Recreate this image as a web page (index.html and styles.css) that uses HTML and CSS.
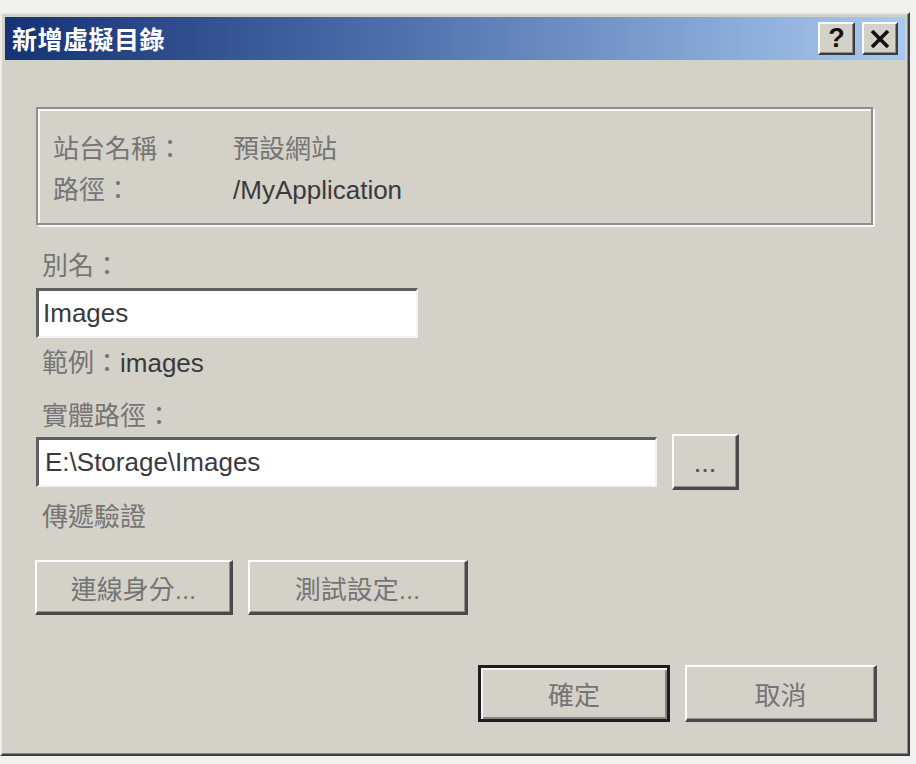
FILE: index.html
```html
<!DOCTYPE html>
<html lang="zh-Hant">
<head>
<meta charset="utf-8">
<title>新增虛擬目錄</title>
<link rel="stylesheet" href="styles.css">
</head>
<body>
<div class="dialog">
  <div class="titlebar">
    <span class="title">新增虛擬目錄</span>
    <div class="tb-buttons">
      <div class="tb-btn help">?</div>
      <div class="tb-btn close">
        <svg width="20" height="18" viewBox="0 0 20 18"><path d="M2 1 L18 17 M18 1 L2 17" stroke="#111" stroke-width="3.6" fill="none"/></svg>
      </div>
    </div>
  </div>
  <div class="content">
    <div class="group">
      <div class="row"><span class="k">站台名稱：</span><span class="v">預設網站</span></div>
      <div class="row"><span class="k">路徑：</span><span class="v latin">/MyApplication</span></div>
    </div>
    <div class="label first">別名：</div>
    <div class="input alias"><span class="latin">Images</span></div>
    <div class="label hint">範例：<span class="latin">images</span></div>
    <div class="label phys">實體路徑：</div>
    <div class="path-row">
      <div class="input path"><span class="latin">E:\Storage\Images</span></div>
      <div class="btn browse">...</div>
    </div>
    <div class="label pass">傳遞驗證</div>
    <div class="btn-row">
      <div class="btn conn">連線身分...</div>
      <div class="btn test">測試設定...</div>
    </div>
    <div class="footer">
      <div class="btn ok">確定</div>
      <div class="btn cancel">取消</div>
    </div>
  </div>
</div>
</body>
</html>
```

FILE: styles.css
```css
* { box-sizing: border-box; }

body {
  margin: 0;
  background: #f1f1ef;
  font-family: "Liberation Sans", "Noto Sans CJK TC", sans-serif;
  font-size: 26px;
}

.dialog {
  width: 910px;
  height: 744px;
  margin-top: 12px;
  background: #d4d1c9;
  border: 2px solid;
  border-color: #ecebe6 #3e3e3e #3e3e3e #ecebe6;
  padding: 3px;
  box-shadow: inset -1px -1px 0 #8a8a8a;
  display: flex;
  flex-direction: column;
}

.titlebar {
  height: 43px;
  background: linear-gradient(to right, #163274 0%, #4a6aa8 40%, #a9c9ef 100%);
  display: flex;
  align-items: center;
  justify-content: space-between;
  padding: 0 7px 0 7px;
}

.title {
  color: #fff;
  font-family: "Noto Sans CJK TC", sans-serif;
  font-weight: 700;
  font-size: 25px;
  line-height: 43px;
  letter-spacing: 0.5px;
}

.tb-buttons {
  display: flex;
  gap: 7px;
}

.tb-btn {
  width: 37px;
  height: 33px;
  background: #d4d1c9;
  border: 2px solid;
  border-color: #fbfbf9 #3c3c3c #3c3c3c #fbfbf9;
  box-shadow: inset -1px -1px 0 #8a8a8a;
  display: flex;
  align-items: center;
  justify-content: center;
  font-weight: 700;
  color: #111;
}

.tb-btn.help {
  font-size: 27px;
  line-height: 1;
}

.tb-btn.close { width: 36px; }

.content {
  flex: 1;
  padding: 0 32px 0 31px;
  display: flex;
  flex-direction: column;
}

.k, .label, .v, .btn { color: #757575; }
.latin { color: #3a3a3a; }

.group {
  margin-top: 47px;
  height: 118px;
  border: 2px solid #8e8e8e;
  box-shadow: inset 2px 2px 0 #f7f7f5, 2px 2px 0 #f7f7f5;
  padding: 20px 15px 0 15px;
}

.row {
  display: flex;
  height: 41px;
  line-height: 41px;
}

.k { width: 180px; }

.label {
  line-height: 36px;
  height: 36px;
  padding-left: 6px;
}

.label.first { margin-top: 23px; }
.label.hint { margin-top: 7px; }
.label.phys { margin-top: 17px; }
.label.pass { margin-top: 9px; }

.input {
  background: #fff;
  height: 50px;
  border-style: solid;
  border-width: 3px 2px 2px 3px;
  border-color: #5e5e5e #f3f3f1 #f3f3f1 #5e5e5e;
  display: flex;
  align-items: center;
  padding-left: 4px;
}

.input.alias {
  width: 382px;
  margin-top: 4px;
}

.path-row {
  display: flex;
  align-items: center;
  gap: 15px;
  height: 56px;
}

.input.path { width: 621px; padding-left: 6px; }

.btn {
  background: #d4d1c9;
  border-style: solid;
  border-width: 2px 3px 3px 2px;
  border-color: #fbfbf9 #4a4a4a #4a4a4a #fbfbf9;
  box-shadow: inset -1px -1px 0 #8f8f8f;
  display: flex;
  align-items: center;
  justify-content: center;
}

.btn.browse {
  width: 67px;
  height: 56px;
  color: #5a5a5a;
  font-weight: 700;
  font-size: 20px;
  letter-spacing: 2px;
  padding: 8px 0 0 2px;
}

.btn-row {
  display: flex;
  gap: 15px;
  margin-top: 25px;
  margin-left: -1px;
}

.btn.conn { width: 198px; height: 55px; }
.btn.test { width: 220px; height: 55px; }

.footer {
  display: flex;
  justify-content: flex-end;
  gap: 15px;
  margin-top: 50px;
  margin-right: -4px;
}

.btn.ok, .btn.cancel {
  width: 192px;
  height: 57px;
}

.btn.ok {
  border: 3px solid #1e1e1e;
  box-shadow: inset 2px 2px 0 #f6f6f4, inset -2px -2px 0 #858585;
}
```
